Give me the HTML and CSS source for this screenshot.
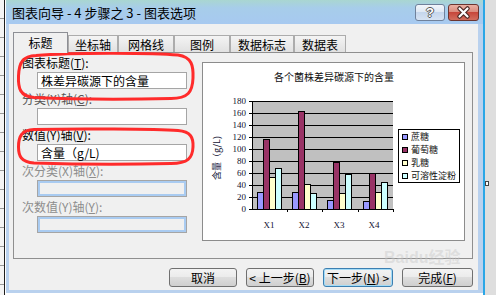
FILE: index.html
```html
<!DOCTYPE html>
<html lang="zh-CN">
<head>
<meta charset="utf-8">
<title>图表向导 - 4 步骤之 3 - 图表选项</title>
<link rel="stylesheet" href="styles.css">
</head>
<body>
<div class="screen">
  <div class="leftstrip"></div>
  <div class="dialog">
    <div class="titlebar">
      <span class="title">图表向导 - 4 步骤之 3 - 图表选项</span>
      <div class="tbtns">
        <span class="tbtn help">?</span>
        <span class="tbtn close">
          <svg width="29" height="15" viewBox="0 0 29 15">
            <path d="M10.5 3.5 L18.5 11.5 M18.5 3.5 L10.5 11.5" stroke="#4b2622" stroke-width="4.5" stroke-linecap="round" fill="none"/>
            <path d="M10.5 3.5 L18.5 11.5 M18.5 3.5 L10.5 11.5" stroke="#fff" stroke-width="2.2" stroke-linecap="round" fill="none"/>
          </svg>
        </span>
      </div>
    </div>
    <div class="body">
      <div class="tabs">
        <div class="tab active w55">标题</div>
        <div class="tab w50">坐标轴</div>
        <div class="tab w56">网格线</div>
        <div class="tab w56">图例</div>
        <div class="tab w64">数据标志</div>
        <div class="tab w52">数据表</div>
      </div>
      <div class="panel">
        <div class="fields">
          <div class="lbl">图表标题(<u>T</u>):</div>
          <div class="inp">株差异碳源下的含量</div>
          <div class="lbl mid">分类(X)轴(<u>C</u>):</div>
          <div class="inp"></div>
          <div class="lbl">数值(Y)轴(<u>V</u>):</div>
          <div class="inp">含量（g/L)</div>
          <div class="lbl off">次分类(X)轴(<u>X</u>):</div>
          <div class="inp dis"></div>
          <div class="lbl off">次数值(Y)轴(<u>Y</u>):</div>
          <div class="inp dis"></div>
        </div>
        <div class="preview">
          <svg class="chart" width="261" height="177" viewBox="0 0 261 177">
            <text class="ctitle" x="131" y="18" text-anchor="middle">各个菌株差异碳源下的含量</text>
            <rect x="49" y="38" width="141" height="108" fill="#c0c0c0"/>
            <g stroke="#000" stroke-width="1" fill="none">
              <path d="M49 38.5H190M49 50.5H190M49 62.5H190M49 74.5H190M49 86.5H190M49 98.5H190M49 110.5H190M49 122.5H190M49 134.5H190"/>
              <path d="M49.5 38V147M49 146.5H190.5"/>
              <path d="M46 38.5H49M46 50.5H49M46 62.5H49M46 74.5H49M46 86.5H49M46 98.5H49M46 110.5H49M46 122.5H49M46 134.5H49M46 146.5H49"/>
              <path d="M84.5 146V149M119.5 146V149M155.5 146V149M190.5 146V149"/>
            </g>
            <g class="ylab" text-anchor="end">
              <text x="43" y="41">180</text>
              <text x="43" y="53">160</text>
              <text x="43" y="65">140</text>
              <text x="43" y="77">120</text>
              <text x="43" y="89">100</text>
              <text x="43" y="101">80</text>
              <text x="43" y="113">60</text>
              <text x="43" y="125">40</text>
              <text x="43" y="137">20</text>
              <text x="43" y="149">0</text>
            </g>
            <text class="ytitle" transform="translate(17,95) rotate(-90)" text-anchor="middle">含量（g/L)</text>
            <g stroke="#000" stroke-width="1">
              <rect x="54.5" y="129.5" width="6" height="17" fill="#9999ff"/>
              <rect x="60.5" y="76.5" width="6" height="70" fill="#993366"/>
              <rect x="66.5" y="114.5" width="6" height="32" fill="#ffffcc"/>
              <rect x="72.5" y="105.5" width="6" height="41" fill="#ccffff"/>

              <rect x="89.5" y="129.5" width="6" height="17" fill="#9999ff"/>
              <rect x="95.5" y="48.5" width="6" height="98" fill="#993366"/>
              <rect x="101.5" y="121.5" width="6" height="25" fill="#ffffcc"/>
              <rect x="107.5" y="130.5" width="6" height="16" fill="#ccffff"/>

              <rect x="124.5" y="137.5" width="6" height="9" fill="#9999ff"/>
              <rect x="130.5" y="99.5" width="6" height="47" fill="#993366"/>
              <rect x="136.5" y="130.5" width="6" height="16" fill="#ffffcc"/>
              <rect x="142.5" y="111.5" width="6" height="35" fill="#ccffff"/>

              <rect x="160.5" y="138.5" width="6" height="8" fill="#9999ff"/>
              <rect x="166.5" y="110.5" width="6" height="36" fill="#993366"/>
              <rect x="172.5" y="129.5" width="6" height="17" fill="#ffffcc"/>
              <rect x="178.5" y="119.5" width="6" height="27" fill="#ccffff"/>
            </g>
            <g class="xlab" text-anchor="middle">
              <text x="66" y="165">X1</text>
              <text x="101" y="165">X2</text>
              <text x="136" y="165">X3</text>
              <text x="171" y="165">X4</text>
            </g>
          </svg>
          <div class="legend">
            <div class="lrow"><span class="sw blue"></span><span>蔗糖</span></div>
            <div class="lrow"><span class="sw maroon"></span><span>葡萄糖</span></div>
            <div class="lrow"><span class="sw yellow"></span><span>乳糖</span></div>
            <div class="lrow"><span class="sw cyan"></span><span>可溶性淀粉</span></div>
          </div>
        </div>
      </div>
      <div class="buttons">
        <div class="btn w68">取消</div>
        <div class="btn w68">&lt; 上一步(<u>B</u>)</div>
        <div class="btn w70 focus">下一步(<u>N</u>) &gt;</div>
        <div class="btn w71">完成(<u>F</u>)</div>
      </div>
    </div>
    <svg class="marks" width="477" height="293" viewBox="0 0 477 293">
      <path d="M30 55.5 C70 52 150 53 172 55 C186 57 187.5 66 187 78 C186.5 92 182 98.5 165 98.5 C120 99.5 60 99 28 97.5 C14 96.5 12 88 12.5 76 C13 62 17 56 30 55.5 Z" fill="none" stroke="#ff2b2b" stroke-width="3"/>
      <path d="M28 129.5 C70 128.5 150 129 172 130.5 C185 131.5 187.5 138 187 147 C186.5 158 182 163.5 165 163.5 C120 164.5 60 164 28 163 C15 162 12.5 156 12.5 147 C12.5 136 16 130 28 129.5 Z" fill="none" stroke="#ff2b2b" stroke-width="3"/>
    </svg>
    <div class="watermark">Baidu经验</div>
  </div>
  <div class="rightstrip"><span class="grip"></span></div>
</div>
</body>
</html>
```
FILE: styles.css
```css
* { box-sizing: border-box; }

body {
  margin: 0;
  width: 496px;
  height: 295px;
  overflow: hidden;
  background: #fff;
  font-family: "Noto Sans CJK SC", "Liberation Sans", sans-serif;
  font-size: 12px;
  color: #000;
}

.screen {
  display: flex;
  height: 295px;
}

.leftstrip {
  width: 6px;
  height: 295px;
  background:
    linear-gradient(to right, transparent 0 4px, #1e1e1e 4px 5px, #fff 5px),
    repeating-linear-gradient(to bottom, #f4f4f4 0 18px, #9a9a9a 18px 19px);
}

.dialog {
  position: relative;
  width: 477px;
  height: 293px;
  display: flex;
  flex-direction: column;
  background: linear-gradient(to bottom, #a9d6d1 0px, #a7cdea 8px, #a7c9f0 24px, #b9d1ee 24px);
}

.titlebar {
  height: 24px;
  display: flex;
  justify-content: space-between;
  padding: 0 4px 0 6px;
}

.title {
  font-size: 13px;
  line-height: 25px;
  color: #000;
  white-space: pre;
}

.tbtns {
  display: flex;
  gap: 3px;
  margin-top: 4px;
}

.tbtn {
  height: 17px;
  border-radius: 3px;
  display: flex;
  align-items: center;
  justify-content: center;
}

.help {
  width: 30px;
  border: 1px solid #6f819b;
  background: linear-gradient(#f2f6fb, #dde7f3 50%, #c5d6ec 50%, #d6e3f3);
  color: #fff;
  font-family: "Liberation Sans", sans-serif;
  font-weight: bold;
  font-size: 13px;
  text-shadow: 1px 0 #555, -1px 0 #555, 0 1px #555, 0 -1px #555;
}

.close {
  width: 31px;
  border: 1px solid #6b3530;
  background: linear-gradient(#eab0a2, #d8887a 50%, #c7473b 50%, #d26e5e);
}

.body {
  flex: 1;
  margin: 0 5px 3px 3px;
  background: #f0f0f0;
  padding: 8px 5px 0 4px;
  display: flex;
  flex-direction: column;
}

.tabs {
  display: flex;
  align-items: flex-start;
  height: 21px;
  margin-bottom: -1px;
  position: relative;
  z-index: 1;
}

.tab {
  height: 17px;
  margin-top: 3px;
  border: 1px solid #acacac;
  border-bottom: none;
  background: linear-gradient(#f4f4f4, #e1e1e1);
  display: flex;
  align-items: center;
  justify-content: center;
  line-height: 15px;
}

.tab.active {
  height: 21px;
  margin-top: 0;
  border-color: #8d8f95;
  background: #f0f0f0;
  padding-bottom: 2px;
}

.w50 { width: 50px; }
.w52 { width: 52px; }
.w55 { width: 55px; }
.w56 { width: 56px; }
.w64 { width: 64px; }
.w68 { width: 68px; }
.w70 { width: 70px; }
.w71 { width: 71px; }

.panel {
  height: 207px;
  border: 1px solid #8f8f8f;
  background: #f0f0f0;
  display: flex;
}

.fields {
  width: 188px;
  display: flex;
  flex-direction: column;
  padding-left: 8px;
}

.lbl {
  height: 19px;
  line-height: 19px;
  white-space: nowrap;
}

.lbl.mid { color: #555; }
.lbl.off { color: #8d8d8d; }

.inp {
  height: 17px;
  width: 150px;
  margin-left: 15px;
  border: 1px solid #a5a5a5;
  background: #fff;
  line-height: 15px;
  padding-left: 3px;
  white-space: nowrap;
}

.inp.dis {
  background: #f0f0f0;
  box-shadow: inset 0 0 0 2px #a9cbf1;
}

.preview {
  position: relative;
  width: 263px;
  height: 179px;
  margin-top: 9px;
  border: 1px solid #8c8c8c;
  background: #fff;
}

.chart {
  display: block;
}

.ctitle {
  font-family: "Noto Sans CJK SC", sans-serif;
  font-size: 10px;
  fill: #111;
}

.ylab text, .xlab text {
  font-family: "Liberation Serif", serif;
  font-size: 9px;
  fill: #101030;
}

.ytitle {
  font-family: "Noto Sans CJK SC", sans-serif;
  font-size: 9px;
  fill: #101030;
}

.legend {
  position: absolute;
  left: 195px;
  top: 66px;
  width: 62px;
  height: 54px;
  border: 1px solid #000;
  background: #fff;
  font-size: 9px;
  color: #111;
}

.lrow {
  display: flex;
  align-items: center;
  gap: 3px;
  height: 13px;
  line-height: 13px;
  padding-left: 3px;
  white-space: nowrap;
}

.sw {
  width: 6px;
  height: 6px;
  border: 1px solid #000;
  flex: none;
}

.sw.blue { background: #9999ff; }
.sw.maroon { background: #993366; }
.sw.yellow { background: #ffffcc; }
.sw.cyan { background: #ccffff; }

.buttons {
  display: flex;
  justify-content: flex-end;
  gap: 9px;
  margin-top: 9px;
}

.btn {
  height: 19px;
  border: 1px solid #707070;
  border-radius: 3px;
  background: linear-gradient(#f3f3f3 0, #ebebeb 50%, #dddddd 50%, #cfcfcf 100%);
  display: flex;
  align-items: center;
  justify-content: center;
  line-height: 15px;
  white-space: pre;
}

.btn.focus {
  border-color: #3c7fb1;
  box-shadow: inset 0 0 0 1px #a3dcf7;
}

.marks {
  position: absolute;
  left: 0;
  top: 0;
  pointer-events: none;
}

.watermark {
  position: absolute;
  left: 378px;
  top: 249px;
  font-family: "Liberation Sans", "Noto Sans CJK SC", sans-serif;
  font-weight: bold;
  font-size: 16px;
  line-height: 18px;
  color: rgba(200, 200, 200, 0.45);
  pointer-events: none;
}

.rightstrip {
  flex: 1;
  height: 295px;
  border-left: 2px solid #2aa6e6;
  background: #dedede;
  display: flex;
  flex-direction: column;
}

.grip {
  width: 4px;
  height: 5px;
  margin-top: 181px;
  background: #fff;
  border: 1px solid #444;
}
```
